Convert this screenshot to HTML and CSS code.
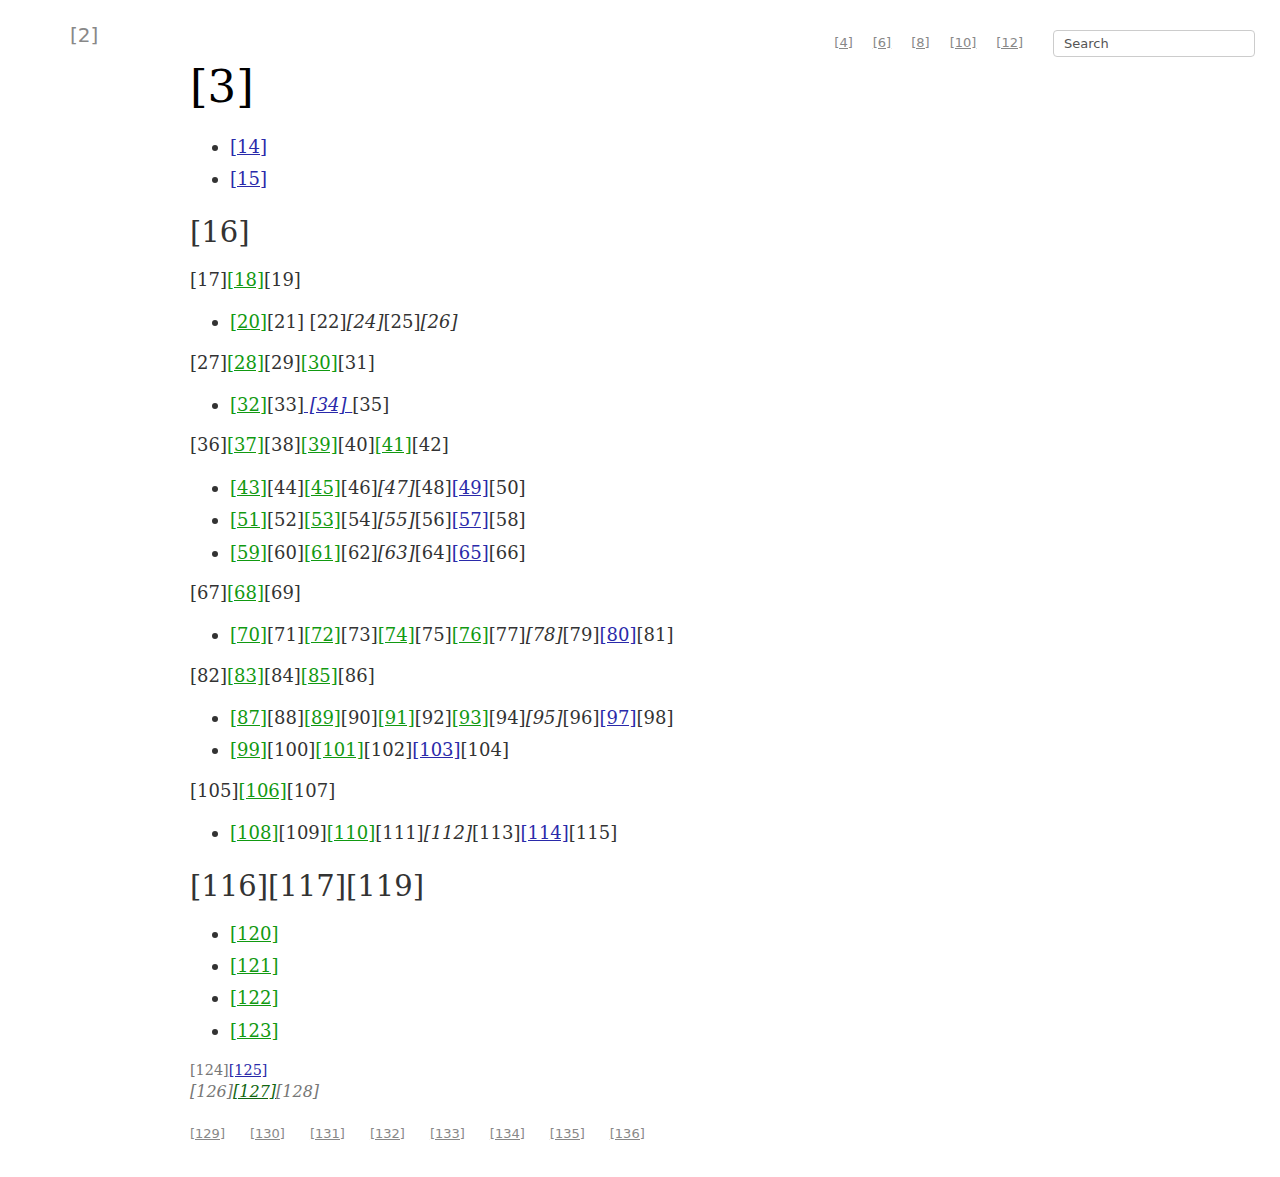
FILE: index.html
```html
<!DOCTYPE html>
<html>
<head>
<meta charset="utf-8">
<link rel="stylesheet" href="styles.css">
</head>
<body>
<div class="page">
  <header class="topbar">
    <div class="logo">[2]</div>
    <nav class="nav">
      <a href="#">[4]</a>
      <a href="#">[6]</a>
      <a href="#">[8]</a>
      <a href="#">[10]</a>
      <a href="#">[12]</a>
      <input class="search" type="text" placeholder="Search">
    </nav>
  </header>
  <main class="content">
    <h1 class="title">[3]</h1>
    <ul class="list">
      <li><a class="blue" href="#">[14]</a></li>
      <li><a class="blue" href="#">[15]</a></li>
    </ul>
    <h3 class="sub">[16]</h3>
    <p>[17]<a class="green" href="#">[18]</a>[19]</p>
    <ul class="list">
      <li><a class="green" href="#">[20]</a>[21] [22]<em>[24]</em>[25]<em>[26]</em></li>
    </ul>
    <p>[27]<a class="green" href="#">[28]</a>[29]<a class="green" href="#">[30]</a>[31]</p>
    <ul class="list">
      <li><a class="green" href="#">[32]</a>[33]<a class="blue" href="#"><em> [34] </em></a>[35]</li>
    </ul>
    <p>[36]<a class="green" href="#">[37]</a>[38]<a class="green" href="#">[39]</a>[40]<a class="green" href="#">[41]</a>[42]</p>
    <ul class="list">
      <li><a class="green" href="#">[43]</a>[44]<a class="green" href="#">[45]</a>[46]<em>[47]</em>[48]<a class="blue" href="#">[49]</a>[50]</li>
      <li><a class="green" href="#">[51]</a>[52]<a class="green" href="#">[53]</a>[54]<em>[55]</em>[56]<a class="blue" href="#">[57]</a>[58]</li>
      <li><a class="green" href="#">[59]</a>[60]<a class="green" href="#">[61]</a>[62]<em>[63]</em>[64]<a class="blue" href="#">[65]</a>[66]</li>
    </ul>
    <p>[67]<a class="green" href="#">[68]</a>[69]</p>
    <ul class="list">
      <li><a class="green" href="#">[70]</a>[71]<a class="green" href="#">[72]</a>[73]<a class="green" href="#">[74]</a>[75]<a class="green" href="#">[76]</a>[77]<em>[78]</em>[79]<a class="blue" href="#">[80]</a>[81]</li>
    </ul>
    <p>[82]<a class="green" href="#">[83]</a>[84]<a class="green" href="#">[85]</a>[86]</p>
    <ul class="list">
      <li><a class="green" href="#">[87]</a>[88]<a class="green" href="#">[89]</a>[90]<a class="green" href="#">[91]</a>[92]<a class="green" href="#">[93]</a>[94]<em>[95]</em>[96]<a class="blue" href="#">[97]</a>[98]</li>
      <li><a class="green" href="#">[99]</a>[100]<a class="green" href="#">[101]</a>[102]<a class="blue" href="#">[103]</a>[104]</li>
    </ul>
    <p>[105]<a class="green" href="#">[106]</a>[107]</p>
    <ul class="list">
      <li><a class="green" href="#">[108]</a>[109]<a class="green" href="#">[110]</a>[111]<em>[112]</em>[113]<a class="blue" href="#">[114]</a>[115]</li>
    </ul>
    <h2 class="sub">[116][117][119]</h2>
    <ul class="list">
      <li><a class="green" href="#">[120]</a></li>
      <li><a class="green" href="#">[121]</a></li>
      <li><a class="green" href="#">[122]</a></li>
      <li><a class="green" href="#">[123]</a></li>
    </ul>
    <div class="meta">
      <div class="meta-small">[124]<a class="blue" href="#">[125]</a></div>
      <div class="meta-italic">[126]<a class="darkgreen" href="#">[127]</a>[128]</div>
    </div>
    <nav class="footer-links">
      <a href="#">[129]</a>
      <a href="#">[130]</a>
      <a href="#">[131]</a>
      <a href="#">[132]</a>
      <a href="#">[133]</a>
      <a href="#">[134]</a>
      <a href="#">[135]</a>
      <a href="#">[136]</a>
    </nav>
  </main>
</div>
</body>
</html>
```
FILE: styles.css
```css
html, body {
  margin: 0;
  padding: 0;
  background: #fff;
}
body {
  font-family: "DejaVu Serif", serif;
  color: #333;
  font-size: 18px;
  line-height: 1.8;
}
.page {
  position: relative;
}
.topbar {
  display: flex;
  justify-content: space-between;
  align-items: flex-start;
  padding: 20px 25px 0 70px;
  height: 40px;
}
.logo {
  font-family: "DejaVu Sans", sans-serif;
  font-size: 20px;
  line-height: 30px;
  color: #888;
}
.nav {
  display: flex;
  align-items: center;
  gap: 20px;
  padding-top: 10px;
  font-family: "DejaVu Sans", sans-serif;
  font-size: 13px;
  line-height: 27px;
}
.nav a {
  color: #888;
  position: relative;
  top: -1px;
}
.nav .search {
  margin-left: 10px;
  width: 202px;
  height: 27px;
  box-sizing: border-box;
  border: 1px solid #ccc;
  border-radius: 4px;
  padding: 0 10px;
  font-family: "DejaVu Sans", sans-serif;
  font-size: 13px;
  color: #555;
  outline: none;
}
.nav .search::placeholder {
  color: #555;
}
.content {
  margin-left: 190px;
  width: 700px;
}
.title {
  font-size: 45px;
  font-weight: normal;
  color: #000;
  line-height: 54px;
  margin: 0 0 17px;
}
.sub {
  font-size: 29px;
  font-weight: normal;
  line-height: 36px;
  margin: 18px 0 14px;
  color: #333;
}
p {
  margin: 8px 0 10px;
}
.list {
  margin: 10px 0 8px;
  padding-left: 40px;
}
em {
  font-style: italic;
}
a {
  text-decoration: underline;
}
a.green {
  color: #119911;
}
a.blue {
  color: #2a2aaa;
}
a.darkgreen {
  color: #116611;
}
.meta {
  margin-top: 13px;
  color: #777;
}
.meta-small {
  font-size: 14.4px;
  line-height: 20px;
}
.meta-italic {
  font-size: 16px;
  line-height: 24px;
  font-style: italic;
}
.footer-links {
  display: flex;
  gap: 25px;
  margin-top: 20px;
  font-family: "DejaVu Sans", sans-serif;
  font-size: 13px;
  line-height: 20px;
}
.footer-links a {
  color: #888;
}
```
